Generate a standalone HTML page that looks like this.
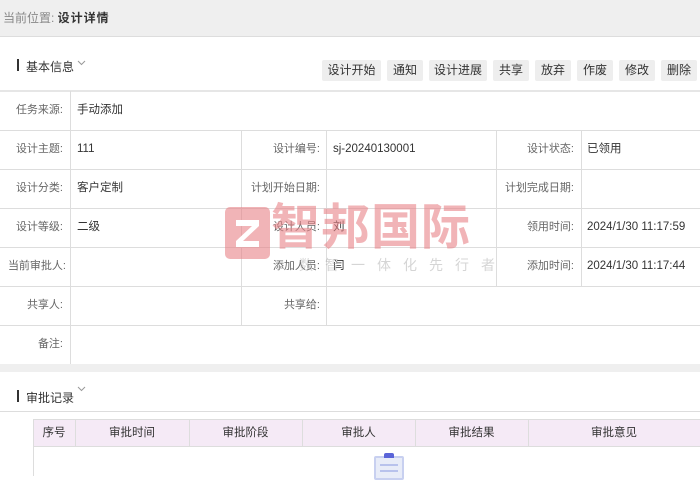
<!DOCTYPE html>
<html><head><meta charset="utf-8"><style>
*{margin:0;padding:0;box-sizing:border-box}
body{width:700px;height:476px;overflow:hidden;background:#fff;font-family:"Liberation Sans","Noto Sans CJK SC",sans-serif;font-size:12px;color:#333;position:relative}
.a{position:absolute}
.top{left:0;top:0;width:700px;height:37px;background:#efefef;border-bottom:1px solid #ddd}
.btn{top:60px;height:21px;background:#eee;border-radius:2px;line-height:21px;text-align:center;font-size:12px;color:#333}
.hl{height:1px;background:#ddd;left:0;width:700px}
.vl{width:1px;background:#ddd}
.lb{text-align:right;color:#666;line-height:39px;height:39px;font-size:11px;white-space:nowrap}
.vv{color:#333;line-height:39px;height:39px;font-size:11.5px}
</style></head><body>
<div class="a top"></div>
<div class="a" style="left:3px;top:9px;font-size:12px;color:#888">当前位置: <b style="color:#333;letter-spacing:1px">设计详情</b></div>

<div class="a" style="left:17px;top:59px;width:2px;height:12px;background:#333"></div>
<div class="a" style="left:26px;top:58px;font-size:12px;color:#333">基本信息</div>
<svg class="a" style="left:77px;top:60px" width="9" height="6" viewBox="0 0 9 6"><path d="M1 1L4.5 4.5L8 1" fill="none" stroke="#999" stroke-width="1"/></svg>

<div class="a btn" style="left:322px;width:59px">设计开始</div>
<div class="a btn" style="left:387px;width:36px">通知</div>
<div class="a btn" style="left:429px;width:58px">设计进展</div>
<div class="a btn" style="left:493px;width:36px">共享</div>
<div class="a btn" style="left:535px;width:36px">放弃</div>
<div class="a btn" style="left:577px;width:36px">作废</div>
<div class="a btn" style="left:619px;width:36px">修改</div>
<div class="a btn" style="left:661px;width:36px">删除</div>

<div class="a hl" style="top:90px;height:2px;background:#e6e6e6"></div>
<div class="a hl" style="top:130px"></div>
<div class="a hl" style="top:169px"></div>
<div class="a hl" style="top:208px"></div>
<div class="a hl" style="top:247px"></div>
<div class="a hl" style="top:286px"></div>
<div class="a hl" style="top:325px"></div>
<div class="a vl" style="left:70px;top:91px;height:273px"></div>
<div class="a vl" style="left:241px;top:130px;height:195px"></div>
<div class="a vl" style="left:326px;top:130px;height:195px"></div>
<div class="a vl" style="left:496px;top:130px;height:156px"></div>
<div class="a vl" style="left:581px;top:130px;height:156px"></div>

<div class="a lb" style="left:0;top:91px;width:63px">任务来源:</div><div class="a vv" style="left:77px;top:91px">手动添加</div>
<div class="a lb" style="left:0;top:130px;width:63px">设计主题:</div><div class="a vv" style="left:77px;top:130px">111</div>
<div class="a lb" style="left:241px;top:130px;width:79px">设计编号:</div><div class="a vv" style="left:333px;top:130px">sj-20240130001</div>
<div class="a lb" style="left:496px;top:130px;width:78px">设计状态:</div><div class="a vv" style="left:587px;top:130px">已领用</div>
<div class="a lb" style="left:0;top:169px;width:63px">设计分类:</div><div class="a vv" style="left:77px;top:169px">客户定制</div>
<div class="a lb" style="left:241px;top:169px;width:79px">计划开始日期:</div>
<div class="a lb" style="left:496px;top:169px;width:78px">计划完成日期:</div>
<div class="a lb" style="left:0;top:208px;width:63px">设计等级:</div><div class="a vv" style="left:77px;top:208px">二级</div>
<div class="a lb" style="left:241px;top:208px;width:79px">设计人员:</div><div class="a vv" style="left:333px;top:208px">刘</div>
<div class="a lb" style="left:496px;top:208px;width:78px">领用时间:</div><div class="a vv" style="left:587px;top:208px">2024/1/30 11:17:59</div>
<div class="a lb" style="left:0;top:247px;width:66px">当前审批人:</div>
<div class="a lb" style="left:241px;top:247px;width:79px">添加人员:</div><div class="a vv" style="left:333px;top:247px">闫</div>
<div class="a lb" style="left:496px;top:247px;width:78px">添加时间:</div><div class="a vv" style="left:587px;top:247px">2024/1/30 11:17:44</div>
<div class="a lb" style="left:0;top:286px;width:63px">共享人:</div>
<div class="a lb" style="left:241px;top:286px;width:79px">共享给:</div>
<div class="a lb" style="left:0;top:325px;width:63px">备注:</div>

<div class="a" style="left:0;top:364px;width:700px;height:8px;background:#efefef"></div>

<!-- watermark -->
<svg class="a" style="left:225px;top:207px" width="45" height="52" viewBox="0 0 45 52">
<rect x="0" y="0" width="45" height="52" rx="5" fill="rgba(232,130,135,.6)"/>
<path d="M11 13H34V19L18 34H34V40H11V34L27 19H11Z" fill="#fff"/>
</svg>
<div class="a" style="left:271px;top:199px;font-size:49px;font-weight:bold;color:rgba(232,130,135,.6);letter-spacing:1px;line-height:58px">智邦国际</div>
<div class="a" style="left:299px;top:255px;font-size:14px;color:rgba(150,150,150,.4);letter-spacing:12px">数智一体化先行者</div>

<div class="a" style="left:17px;top:390px;width:2px;height:12px;background:#333"></div>
<div class="a" style="left:26px;top:389px;font-size:12px;color:#333">审批记录</div>
<svg class="a" style="left:77px;top:386px" width="9" height="6" viewBox="0 0 9 6"><path d="M1 1L4.5 4.5L8 1" fill="none" stroke="#999" stroke-width="1"/></svg>
<div class="a hl" style="top:411px"></div>

<div class="a" style="left:33px;top:419px;width:667px;height:28px;background:#f5eaf6;border:1px solid #ddd;border-right:none"></div>
<div class="a vl" style="left:75px;top:419px;height:28px"></div>
<div class="a vl" style="left:189px;top:419px;height:28px"></div>
<div class="a vl" style="left:302px;top:419px;height:28px"></div>
<div class="a vl" style="left:415px;top:419px;height:28px"></div>
<div class="a vl" style="left:528px;top:419px;height:28px"></div>
<div class="a vl" style="left:33px;top:447px;height:29px"></div>
<div class="a" style="left:33px;top:419px;width:42px;line-height:28px;text-align:center;font-size:11.5px">序号</div>
<div class="a" style="left:75px;top:419px;width:114px;line-height:28px;text-align:center;font-size:11.5px">审批时间</div>
<div class="a" style="left:189px;top:419px;width:113px;line-height:28px;text-align:center;font-size:11.5px">审批阶段</div>
<div class="a" style="left:302px;top:419px;width:113px;line-height:28px;text-align:center;font-size:11.5px">审批人</div>
<div class="a" style="left:415px;top:419px;width:113px;line-height:28px;text-align:center;font-size:11.5px">审批结果</div>
<div class="a" style="left:528px;top:419px;width:172px;line-height:28px;text-align:center;font-size:11.5px">审批意见</div>

<div class="a" style="left:374px;top:456px;width:30px;height:24px;background:#e8ecf8;border:2px solid #c8d0f0;border-radius:2px"></div>
<div class="a" style="left:384px;top:453px;width:10px;height:5px;background:#5a64d8;border-radius:2px 2px 0 0"></div>
<div class="a" style="left:380px;top:464px;width:18px;height:2px;background:#b8c2ec"></div>
<div class="a" style="left:380px;top:470px;width:18px;height:2px;background:#b8c2ec"></div>
</body></html>
